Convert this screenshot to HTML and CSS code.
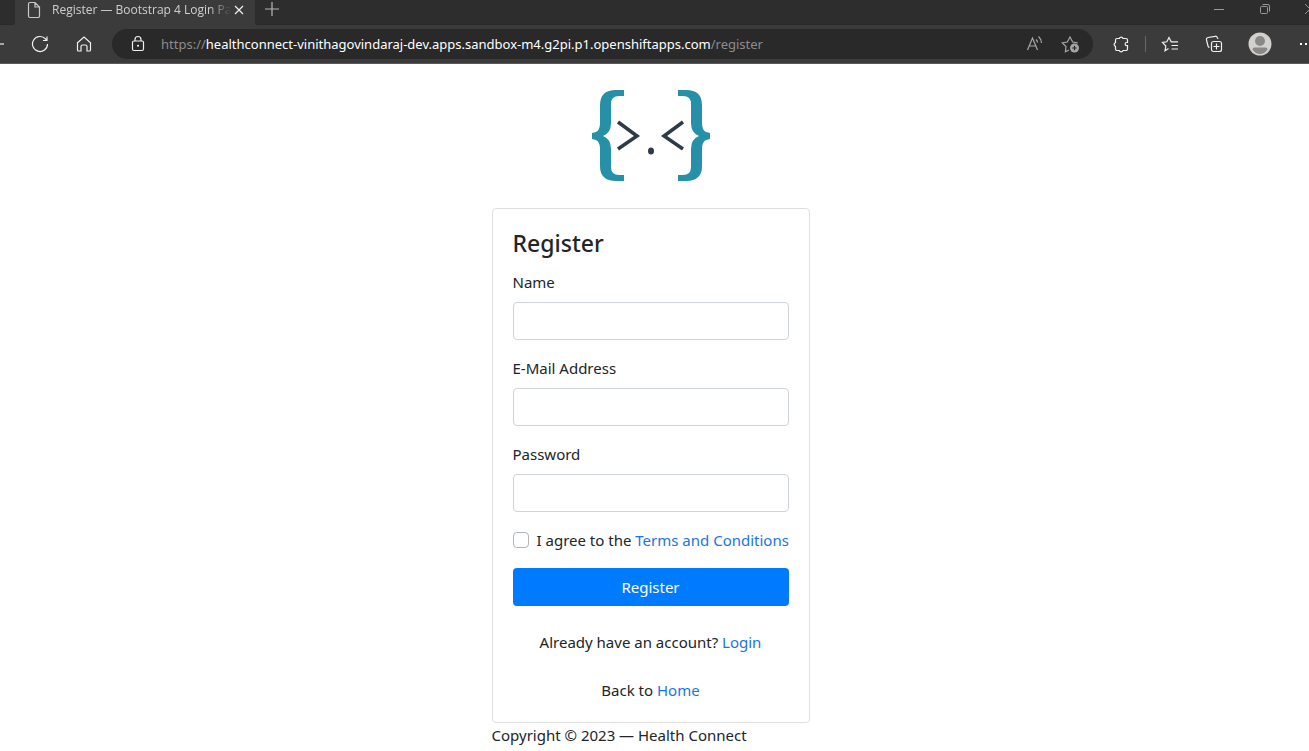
FILE: index.html
```html
<!DOCTYPE html>
<html lang="en">
<head>
<meta charset="utf-8">
<meta name="viewport" content="width=device-width, initial-scale=1">
<title>Register — Bootstrap 4 Login Page</title>
<link rel="stylesheet" href="styles.css">
</head>
<body>
<header class="browser">
  <div class="titlebar">
    <div class="tab-rest tab-rest-left"></div>
    <div class="tab">
      <svg class="tab-page" width="14" height="18" viewBox="0 0 14 18"><path d="M3 1.500h5l4.500 4.500v9a1.500 1.500 0 0 1-1.500 1.500H3A1.500 1.500 0 0 1 1.500 15V3A1.500 1.500 0 0 1 3 1.500zM8 1.500V6h4.500"/></svg>
      <span class="tab-title">Register — Bootstrap 4 Login Pa</span>
      <button class="tab-close" type="button" aria-label="Close tab"><svg width="10" height="10" viewBox="0 0 10 10"><path d="M1 1l8 8M9 1L1 9"/></svg></button>
    </div>
    <div class="tab-rest tab-rest-right">
      <button class="new-tab" type="button" aria-label="New tab"><svg width="16" height="16" viewBox="0 0 16 16"><path d="M8 1v14M1 8h14"/></svg></button>
      <div class="window-buttons">
        <button type="button" aria-label="Minimize"><svg width="12" height="12" viewBox="0 0 12 12"><path d="M1 6.500h10"/></svg></button>
        <button type="button" aria-label="Restore"><svg width="12" height="12" viewBox="0 0 12 12"><rect x="1.500" y="3.500" width="7" height="7" rx="1"/><path d="M3.500 1.500H9A1.500 1.500 0 0 1 10.500 3v5.500"/></svg></button>
        <button class="close-window" type="button" aria-label="Close"><svg width="4" height="12" viewBox="0 0 4 12"><path d="M0 1l5 5-5 5"/></svg></button>
      </div>
    </div>
  </div>
  <div class="toolbar">
    <button class="back" type="button" aria-label="Back"><svg width="4" height="12" viewBox="0 0 4 12"><path d="M0 6h4"/></svg></button>
    <button class="tool" type="button" aria-label="Refresh"><svg width="18" height="18" viewBox="0 0 18 18"><path d="M16.500 9A7.500 7.500 0 1 1 14.600 4L16 5.500M16 1.500v4h-4"/></svg></button>
    <button class="tool" type="button" aria-label="Home"><svg width="18" height="18" viewBox="0 0 18 18"><path d="M2.500 7.800L9 2l6.500 5.800V15a1 1 0 0 1-1 1h-2.500v-4.500a1.500 1.500 0 0 0-1.500-1.500h-3A1.500 1.500 0 0 0 6 11.500V16H3.500a1 1 0 0 1-1-1z"/></svg></button>
    <div class="address">
      <svg class="lock" width="14" height="18" viewBox="0 0 14 18"><rect x="1.500" y="6" width="11" height="9.500" rx="1.500"/><path d="M4 6V4.500a3 3 0 0 1 6 0V6"/><circle cx="7" cy="10.800" r="1" fill="#fff" stroke="none"/></svg>
      <span class="url">https://<b>healthconnect-vinithagovindaraj-dev.apps.sandbox-m4.g2pi.p1.openshiftapps.com</b>/register</span>
      <button class="address-tool" type="button" aria-label="Read aloud"><svg width="18" height="18" viewBox="0 0 18 18"><path d="M1.500 15L6.500 3l5 12M3.200 11h6.600M10 4.500a4 4 0 0 1 1.500 3M12.500 1.500a9 9 0 0 1 3 6.500"/></svg></button>
      <button class="address-tool" type="button" aria-label="Add to favorites"><svg width="20" height="20" viewBox="0 0 20 20"><path d="M8 16L4.400 17.800 5 12.500 1.300 8.800 6.300 8 9 3l2.700 5 5 .8"/><circle cx="13.500" cy="14" r="4.500" fill="#a6a6a6" stroke="none"/><path d="M13.500 11.700v4.600M11.200 14h4.600" stroke="#292929"/></svg></button>
    </div>
    <button class="tool" type="button" aria-label="Extensions"><svg width="18" height="18" viewBox="0 0 18 18"><path d="M5 3.500h2.300a2 2 0 0 1 3.800 0H14a1.500 1.500 0 0 1 1.500 1.500v2.500h-.8a1.600 1.600 0 0 0 0 3.200h.8V14a1.500 1.500 0 0 1-1.500 1.500h-2.900a2 2 0 0 1-3.800 0H5A1.500 1.500 0 0 1 3.500 14v-2.600a2 2 0 0 1 0-3.800V5A1.500 1.500 0 0 1 5 3.500z"/></svg></button>
    <div class="divider"></div>
    <button class="tool" type="button" aria-label="Favorites"><svg width="18" height="18" viewBox="0 0 18 18"><path d="M7.500 13.500L4 15.700l.8-4.700L1.500 7.500l4.300-.7L8 2.500l2.200 4.300H17M10.500 10.500H17M10.500 14H17"/></svg></button>
    <button class="tool" type="button" aria-label="Collections"><svg width="18" height="18" viewBox="0 0 18 18"><rect x="6.500" y="6.500" width="10" height="10" rx="2"/><path d="M11.500 8.500v6M8.500 11.500h6M4.500 12.500A2 2 0 0 1 3 11L1.500 5A2 2 0 0 1 3 2.500l7-1.200a2 2 0 0 1 2.300 1.200l.7 1.500"/></svg></button>
    <button class="tool profile" type="button" aria-label="Profile"><svg width="24" height="24" viewBox="0 0 24 24"><circle cx="12" cy="12" r="11.500" fill="#d2d0ce" stroke="none"/><circle cx="12" cy="9" r="5" fill="#8a8886" stroke="none"/><path d="M4.500 17.500q0-2 2-2h11q2 0 2 2-3 4.500-7.500 4.500t-7.500-4.500z" fill="#8a8886" stroke="none"/></svg></button>
    <button class="more" type="button" aria-label="Settings and more"><svg width="12" height="6" viewBox="0 0 12 6"><path d="M3 2h2v2H3zM8 2h2v2H8z" fill="#fff" stroke="none"/></svg></button>
  </div>
</header>
<main class="page">
  <svg class="brand" width="120" height="94" viewBox="0 0 120 94" role="img" aria-label="Logo">
    <g fill="#2590a8">
      <path id="brace" d="M33 1v6h-5q-8 0-8 8v19q0 10-8 13 8 3 8 13v18q0 8 8 8h5v6H25Q9 92 9 77V60q0-7-4-9l-4-1v-6l4-1q4-2 4-9V16Q9 1 25 1z"/>
      <use href="#brace" transform="matrix(-1 0 0 1 120 0)"/>
    </g>
    <path d="M27 33L46 47 27 60M92 33L73 47 92 60" fill="none" stroke="#2c3b47" stroke-width="3.500"/>
    <ellipse cx="60" cy="62" rx="3" ry="3.500" fill="#2c3b47"/>
  </svg>
  <div class="wrapper">
    <section class="card">
      <h1 class="title">Register</h1>
      <form>
        <div class="group"><label for="name">Name</label><input class="field" id="name" type="text"></div>
        <div class="group"><label for="email">E-Mail Address</label><input class="field" id="email" type="email"></div>
        <div class="group"><label for="password">Password</label><input class="field" id="password" type="password"></div>
        <div class="agree"><input class="check" id="agree" type="checkbox"><label for="agree">I agree to the <a href="#">Terms and Conditions</a></label></div>
        <button class="submit" type="submit">Register</button>
      </form>
      <p class="note">Already have an account? <a href="#">Login</a></p>
      <p class="note">Back to <a href="#">Home</a></p>
    </section>
    <footer>Copyright © 2023 — Health Connect</footer>
  </div>
</main>
</body>
</html>
```
FILE: styles.css
```css
* { box-sizing: border-box; }
body {
  margin: 0;
  background: #fff;
  color: #212529;
  font-family: "Segoe UI", "Noto Sans", "Open Sans", sans-serif;
  font-size: 15px;
  line-height: 24px;
}
button, input { font: inherit; }
a { color: #1a75e0; text-decoration: none; }
a:hover { text-decoration: underline; }

.browser { background: #3b3b3b; border-bottom: 1px solid #5a5a5a; }
.browser button {
  display: flex;
  align-items: center;
  justify-content: center;
  flex: none;
  padding: 0;
  border: 0;
  background: none;
}
.browser svg { display: block; flex: none; fill: none; stroke: #f0f0f0; stroke-width: 1.2; }

.titlebar { display: flex; height: 25px; }
.tab-rest { background: #2d2d2d; border-bottom: 1px solid #292929; }
.tab-rest-left { width: 15px; border-bottom-right-radius: 3px; }
.tab-rest-right { display: flex; flex: 1; border-bottom-left-radius: 3px; }
.tab { display: flex; align-items: center; width: 240px; padding: 0 10px 6px 12px; }
.browser .tab-page { stroke: #c8c8c8; }
.tab-title {
  flex: 1;
  margin-left: 11px;
  color: #cfcfcf;
  font-family: "Segoe UI", "Open Sans", sans-serif;
  font-size: 12px;
  line-height: 18px;
  white-space: nowrap;
  mask-image: linear-gradient(to right, #000 88%, transparent);
}
.browser .tab-close { width: 12px; margin-left: 2px; }
.browser .new-tab { width: 34px; height: 18px; }
.new-tab svg { stroke: #b8b8b8; }
.window-buttons { display: flex; height: 18px; margin-left: auto; }
.window-buttons button { width: 46px; }
.window-buttons svg { stroke: #999; stroke-width: 1; }
.window-buttons .close-window { justify-content: flex-end; width: 21px; }

.toolbar { display: flex; align-items: center; height: 38px; }
.browser .back { justify-content: flex-start; width: 18px; }
.browser .tool { width: 44px; height: 30px; }
.address {
  display: flex;
  align-items: center;
  flex: 1;
  min-width: 0;
  height: 30px;
  margin: 0 6px;
  padding: 0 4px 0 19px;
  border-radius: 15px;
  background: #292929;
}
.url {
  flex: 1;
  min-width: 0;
  margin-left: 16px;
  overflow: hidden;
  color: #8c8c8c;
  font-size: 13px;
  line-height: 20px;
  white-space: nowrap;
}
.url b { color: #fff; font-weight: 400; }
.browser .address-tool { width: 36px; }
.address-tool svg { stroke: #a6a6a6; }
.divider { width: 1px; height: 16px; margin: 0 2px; background: #686868; }
.browser .profile { width: 48px; }
.browser .more { justify-content: flex-end; width: 25px; }

.page { display: flex; flex-direction: column; align-items: center; padding: 25px 8px 0 0; }
.brand { display: block; margin-bottom: 25px; }
.wrapper { width: 100%; max-width: 318px; }
.card { padding: 20px; border: 1px solid #dfdfdf; border-radius: 4px; }
.title { margin: 0 0 12px; font-size: 23px; font-weight: 500; line-height: 29px; }
.group { margin-bottom: 16px; }
.group label { display: block; margin-bottom: 8px; }
.field {
  display: block;
  width: 100%;
  height: 38px;
  padding: 6px 12px;
  border: 1px solid #ced4da;
  border-radius: 4px;
  background: #fff;
}
.agree { display: flex; align-items: center; gap: 8px; margin-bottom: 16px; white-space: nowrap; }
.check {
  appearance: none;
  flex: none;
  width: 16px;
  height: 16px;
  margin: 0;
  border: 1px solid #adb5bd;
  border-radius: 4px;
  background: #fff;
}
.check:checked { border-color: #007bff; background: #007bff; }
.submit {
  display: block;
  width: 100%;
  height: 38px;
  padding: 0;
  border: 0;
  border-radius: 4px;
  background: #007bff;
  color: #fff;
}
.note { margin: 24px 0 0; text-align: center; }
```
